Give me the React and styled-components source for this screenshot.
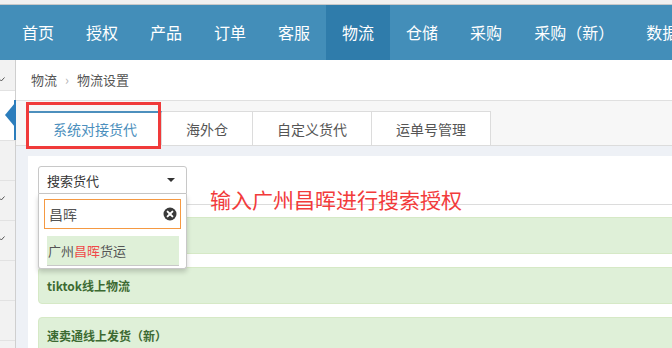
import React from "react";
import styled, { createGlobalStyle } from "styled-components";

const Global = createGlobalStyle`
  html, body { margin: 0; padding: 0; background: #fff; overflow: hidden; }
  body { font-family: "Noto Sans CJK SC", "Noto Sans", "Liberation Sans", sans-serif; }
  * { box-sizing: border-box; }
`;

const Page = styled.div`
  width: 672px;
  height: 348px;
  display: flex;
  flex-direction: column;
  overflow: hidden;
  position: relative;
`;

const TopStrip = styled.div`
  height: 5px;
  flex-shrink: 0;
  background: #f0f0f0;
  border-bottom: 1px solid #c8c8c8;
`;

const Navbar = styled.nav`
  height: 55px;
  background: #438eb9;
  display: flex;
  padding-left: 6px;
  flex-shrink: 0;
`;

const NavItem = styled.div`
  padding: 0 16px;
  display: flex;
  align-items: center;
  color: #fff;
  font-size: 16px;
  white-space: nowrap;
  background: ${(p) => (p.$active ? "#2f7cab" : "transparent")};
  padding-bottom: 2px;
`;

const Body = styled.div`
  flex: 1;
  display: flex;
  min-height: 0;
`;

const Sidebar = styled.aside`
  width: 16px;
  flex-shrink: 0;
  background: #f2f2f2;
  border-right: 1px solid #cfcfcf;
  display: flex;
  flex-direction: column;
`;

const SideItem = styled.div`
  height: ${(p) => p.$h}px;
  flex-shrink: 0;
  border-bottom: 1px solid #e2e2e2;
  position: relative;
  background: ${(p) => (p.$active ? "#fff" : "transparent")};
  padding-top: ${(p) => p.$pt || 0}px;
`;

const ActiveBar = styled.div`
  position: absolute;
  right: -1px;
  top: 9px;
  bottom: 0;
  width: 2px;
  background: #2b7dbc;
`;

const ActiveArrow = styled.div`
  position: absolute;
  right: 0;
  top: 12px;
  width: 0;
  height: 0;
  border-top: 12px solid transparent;
  border-bottom: 12px solid transparent;
  border-right: 10px solid #2b7dbc;
`;

const Chevron = () => (
  <svg width="5" height="5" viewBox="0 0 5 5" style={{ display: "block" }}>
    <polyline points="0,2.5 1.3,4 4.5,0.5" fill="none" stroke="#555" strokeWidth="1" />
  </svg>
);

const Main = styled.main`
  flex: 1;
  display: flex;
  flex-direction: column;
  min-width: 0;
  min-height: 0;
  overflow: hidden;
  position: relative;
`;

const Breadcrumb = styled.div`
  height: 40px;
  flex-shrink: 0;
  display: flex;
  align-items: center;
  padding-left: 15px;
  font-size: 13px;
  color: #555;
  gap: 6px;
  padding-bottom: 1px;
`;

const Sep = styled.span`
  color: #b5b5b5;
  font-size: 13px;
  margin: 0 2px;
`;

const TabBar = styled.div`
  height: 46px;
  background: #f7f7f7;
  border-top: 1px solid #e0e0e0;
  border-bottom: 1px solid #dcdcdc;
  display: flex;
  align-items: flex-end;
  padding-left: 12px;
  flex-shrink: 0;
`;

const Tab = styled.div`
  height: 35px;
  margin-bottom: -1px;
  padding: 0 24px;
  display: flex;
  align-items: center;
  font-size: 14px;
  white-space: nowrap;
  color: ${(p) => (p.$active ? "#4c8fbd" : "#555")};
  background: #fff;
  border: 1px solid #dcdcdc;
  border-left: ${(p) => (p.$first ? "1px solid #dcdcdc" : "none")};
  border-top: ${(p) => (p.$active ? "2px solid #4c8fbd" : "1px solid #dcdcdc")};
  border-bottom: ${(p) => (p.$active ? "1px solid #fff" : "1px solid #dcdcdc")};
`;

const RedBox = styled.div`
  position: absolute;
  left: 10px;
  top: 42px;
  width: 135px;
  height: 47px;
  border: 3px solid #f03a3a;
  pointer-events: none;
`;

const Content = styled.div`
  flex: 1;
  min-height: 0;
  overflow: hidden;
  background: #eef1f6;
  padding: 10px 0 0 12px;
`;

const Card = styled.div`
  background: #fff;
  width: 760px;
  height: 100%;
  padding: 10px 10px 0;
  position: relative;
`;

const SelectBox = styled.div`
  width: 149px;
  height: 28px;
  border: 1px solid #c8c8c8;
  border-radius: 3px 3px 0 0;
  display: flex;
  align-items: center;
  justify-content: space-between;
  padding: 0 11px 0 8px;
  font-size: 13px;
  color: #333;
  background: #fff;
`;

const Caret = styled.span`
  width: 0;
  height: 0;
  border-left: 4px solid transparent;
  border-right: 4px solid transparent;
  border-top: 4px solid #333;
`;

const Divider = styled.div`
  height: 1px;
  background: #dcdcdc;
  margin-top: 10px;
`;

const Panels = styled.div`
  margin-top: 12px;
  display: flex;
  flex-direction: column;
  gap: 13px;
`;

const Panel = styled.div`
  height: 37px;
  flex-shrink: 0;
  background: #dff0d8;
  border: 1px solid #d6e9c6;
  border-radius: 4px;
  display: flex;
  align-items: center;
  padding-left: 8px;
  font-size: 12px;
  font-weight: bold;
  color: #3c6a32;
`;

const Dropdown = styled.div`
  position: absolute;
  left: 10px;
  top: 38px;
  width: 149px;
  height: 75px;
  background: #fff;
  border: 1px solid #c8c8c8;
  border-top: none;
  border-radius: 0 0 3px 3px;
  box-shadow: 0 3px 5px rgba(0, 0, 0, 0.18);
  padding: 5px 5px 0;
  z-index: 2;
`;

const SearchInput = styled.div`
  height: 30px;
  border: 1px solid #f59942;
  display: flex;
  align-items: center;
  justify-content: space-between;
  padding: 0 3px 0 4px;
  font-size: 14px;
  color: #555;
`;

const ClearIcon = () => (
  <svg width="14" height="14" viewBox="0 0 14 14" style={{ display: "block" }}>
    <circle cx="7" cy="7" r="6.5" fill="#3a3a3a" />
    <path d="M4.6 4.6 L9.4 9.4 M9.4 4.6 L4.6 9.4" stroke="#fff" strokeWidth="2" strokeLinecap="round" />
  </svg>
);

const Result = styled.div`
  margin: 7px 2px 0 3px;
  height: 30px;
  background: #dff0d8;
  border-bottom: 1px solid #c8c8c8;
  display: flex;
  align-items: center;
  padding-left: 1px;
  font-size: 13px;
  color: #555;
`;

const Hit = styled.span`
  color: #f04848;
`;

const Annotation = styled.div`
  position: absolute;
  left: 182px;
  top: 33px;
  font-size: 21px;
  line-height: 1;
  color: #f23b3b;
  white-space: nowrap;
  z-index: 1;
`;

const navItems = ["首页", "授权", "产品", "订单", "客服", "物流", "仓储", "采购", "采购（新）", "数据"];

export default function App() {
  return (
    <Page>
      <Global />
      <TopStrip />
      <Navbar>
        {navItems.map((n) => (
          <NavItem key={n} $active={n === "物流"}>{n}</NavItem>
        ))}
      </Navbar>
      <Body>
        <Sidebar>
          <SideItem $h={31} $pt={17}><Chevron /></SideItem>
          <SideItem $h={50} $active>
            <ActiveBar />
            <ActiveArrow />
          </SideItem>
          <SideItem $h={40} />
          <SideItem $h={40} $pt={15}><Chevron /></SideItem>
          <SideItem $h={40} $pt={15}><Chevron /></SideItem>
          <SideItem $h={40} />
          <SideItem $h={40} />
          <SideItem $h={40} />
        </Sidebar>
        <Main>
          <Breadcrumb>
            <span>物流</span>
            <Sep>›</Sep>
            <span>物流设置</span>
          </Breadcrumb>
          <TabBar>
            <Tab $active $first>系统对接货代</Tab>
            <Tab>海外仓</Tab>
            <Tab>自定义货代</Tab>
            <Tab>运单号管理</Tab>
          </TabBar>
          <RedBox />
          <Content>
            <Card>
              <SelectBox>
                <span>搜索货代</span>
                <Caret />
              </SelectBox>
              <Dropdown>
                <SearchInput>
                  <span>昌晖</span>
                  <ClearIcon />
                </SearchInput>
                <Result>
                  广州<Hit>昌晖</Hit>货运
                </Result>
              </Dropdown>
              <Annotation>输入广州昌晖进行搜索授权</Annotation>
              <Divider />
              <Panels>
                <Panel />
                <Panel>tiktok线上物流</Panel>
                <Panel>速卖通线上发货（新）</Panel>
              </Panels>
            </Card>
          </Content>
        </Main>
      </Body>
    </Page>
  );
}
